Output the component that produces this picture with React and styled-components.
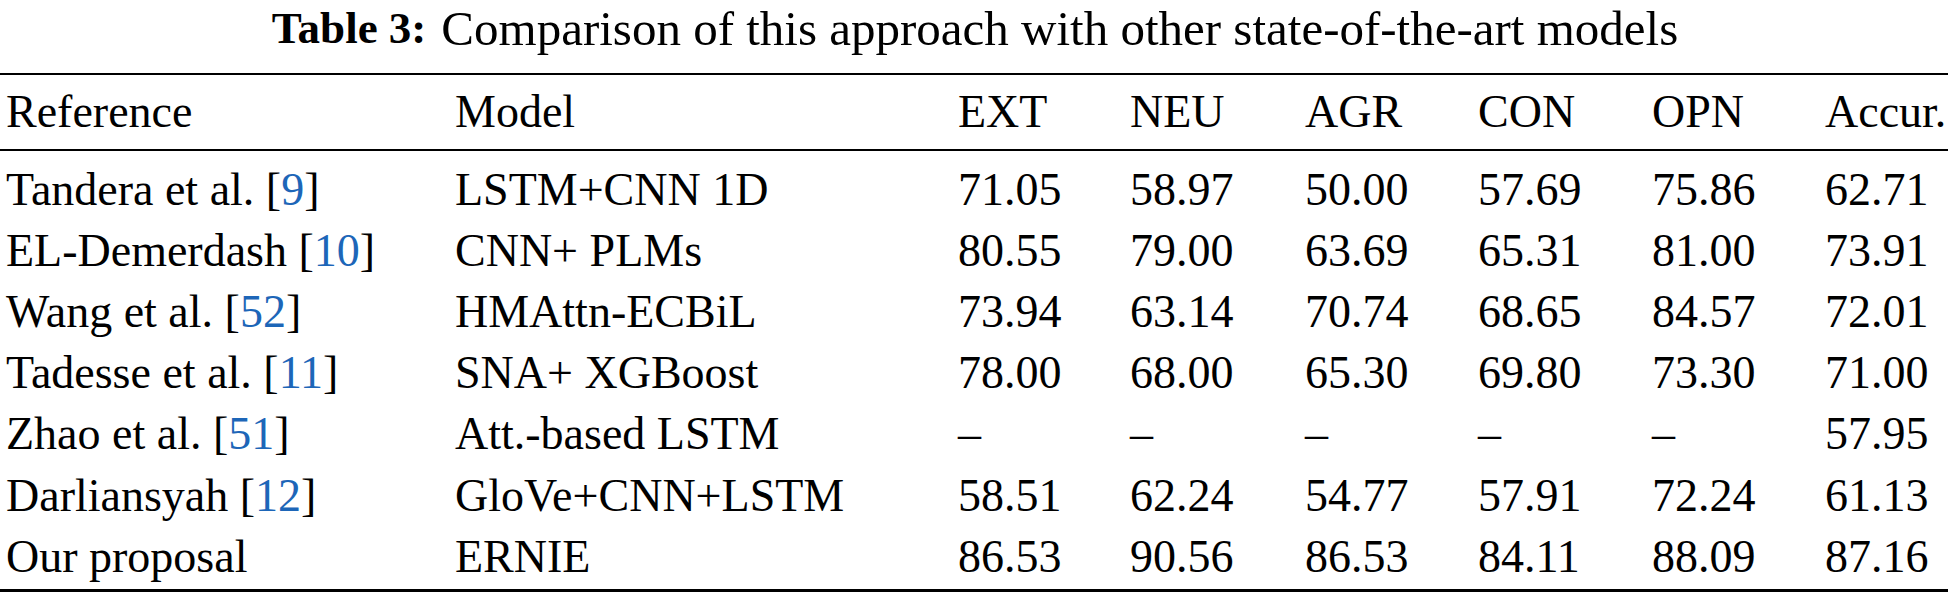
import React from "react";
import styled, { createGlobalStyle } from "styled-components";

const Global = createGlobalStyle`
  html, body { margin: 0; padding: 0; background: #fff; }
  body { font-family: "Liberation Serif", "Times New Roman", serif; color: #000; }
`;

const Page = styled.div`
  width: 1954px;
  height: 596px;
  box-sizing: border-box;
  padding: 0 6px 0 0;
  display: flex;
  flex-direction: column;
`;

const Caption = styled.div`
  height: 73px;
  display: flex;
  align-items: center;
  justify-content: center;
  font-size: 49px;
  line-height: 1;
  padding-left: 2px;
  padding-bottom: 17px;
  box-sizing: border-box;
  white-space: pre;
`;

const Label = styled.span`
  font-weight: bold;
  font-size: 45px;
  margin-right: 15px;
`;

const Rule = styled.div`
  height: ${(p) => p.$h || 2}px;
  background: #000;
`;

const Grid = styled.div`
  display: grid;
  grid-template-columns: 449px 503px 172px 175px 173px 174px 173px 1fr;
  padding-left: 6px;
  font-size: 46px;
  white-space: nowrap;
`;

const HeadGrid = styled(Grid)`
  height: 74px;
  align-items: center;
`;

const Body = styled.div`
  padding: 8px 0 2px;
`;

const Row = styled(Grid)`
  height: 61.2px;
  align-items: center;
`;

const Cell = styled.div`
  line-height: 1;
`;

const Cite = styled.span`
  color: #1d66b8;
`;

const rows = [
  ["Tandera et al.", "9", "LSTM+CNN 1D", ["71.05", "58.97", "50.00", "57.69", "75.86", "62.71"]],
  ["EL-Demerdash", "10", "CNN+ PLMs", ["80.55", "79.00", "63.69", "65.31", "81.00", "73.91"]],
  ["Wang et al.", "52", "HMAttn-ECBiL", ["73.94", "63.14", "70.74", "68.65", "84.57", "72.01"]],
  ["Tadesse et al.", "11", "SNA+ XGBoost", ["78.00", "68.00", "65.30", "69.80", "73.30", "71.00"]],
  ["Zhao et al.", "51", "Att.-based LSTM", ["–", "–", "–", "–", "–", "57.95"]],
  ["Darliansyah", "12", "GloVe+CNN+LSTM", ["58.51", "62.24", "54.77", "57.91", "72.24", "61.13"]],
  ["Our proposal", null, "ERNIE", ["86.53", "90.56", "86.53", "84.11", "88.09", "87.16"]],
];

const heads = ["Reference", "Model", "EXT", "NEU", "AGR", "CON", "OPN", "Accur."];

export default function App() {
  return (
    <Page>
      <Global />
      <Caption>
        <Label>Table 3:</Label>Comparison of this approach with other state-of-the-art models
      </Caption>
      <Rule $h={2} />
      <HeadGrid>
        {heads.map((h) => (
          <Cell key={h}>{h}</Cell>
        ))}
      </HeadGrid>
      <Rule $h={2} />
      <Body>
        {rows.map(([ref, cite, model, vals]) => (
          <Row key={ref}>
            <Cell>
              {ref}
              {cite && (
                <>
                  {" "}[<Cite>{cite}</Cite>]
                </>
              )}
            </Cell>
            <Cell>{model}</Cell>
            {vals.map((v, i) => (
              <Cell key={i}>{v}</Cell>
            ))}
          </Row>
        ))}
      </Body>
      <Rule $h={3} />
    </Page>
  );
}
